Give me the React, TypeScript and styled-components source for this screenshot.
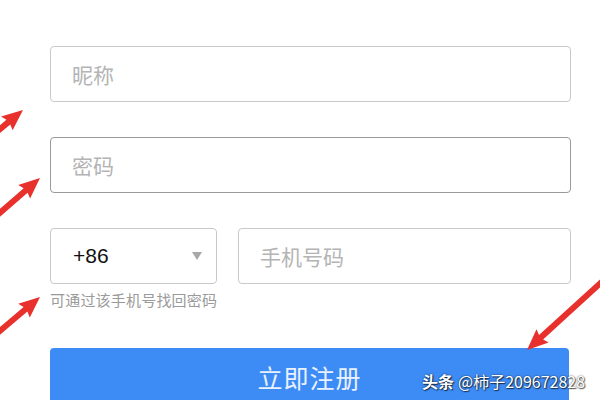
import React from 'react'
import styled, { createGlobalStyle } from 'styled-components'

const GlobalStyle = createGlobalStyle`
  html, body {
    margin: 0;
    padding: 0;
    background: #ffffff;
  }
  body {
    font-family: "Liberation Sans", "Noto Sans CJK SC", sans-serif;
    overflow: hidden;
  }
`

const Page = styled.div`
  position: relative;
  width: 600px;
  height: 400px;
  overflow: hidden;
  background: #fff;
`

const Form = styled.div`
  display: flex;
  flex-direction: column;
  width: 521px;
  padding: 46px 0 0 50px;
`

const Field = styled.div<{ $focused?: boolean; $width?: number }>`
  box-sizing: border-box;
  height: 56px;
  width: ${(p) => (p.$width ? `${p.$width}px` : '100%')};
  border: 1px solid ${(p) => (p.$focused ? '#9a9a9a' : '#c9c9c9')};
  border-radius: 4px;
  display: flex;
  align-items: center;
  padding: 0 21px;
  flex-shrink: 0;
`

const Placeholder = styled.span`
  font-family: "Noto Sans CJK SC", sans-serif;
  font-size: 21px;
  color: #b4b4b4;
`

const Gap = styled.div<{ $h: number }>`
  height: ${(p) => p.$h}px;
`

const Row = styled.div`
  display: flex;
  gap: 21px;
`

const SelectBox = styled(Field)`
  justify-content: space-between;
  padding: 0 14px 0 22px;
`

const Code = styled.span`
  font-family: "Liberation Sans", sans-serif;
  font-size: 21px;
  color: #111;
`

const Caret = styled.span`
  width: 0;
  height: 0;
  border-left: 5px solid transparent;
  border-right: 5px solid transparent;
  border-top: 8px solid #a8a8a8;
`

const Hint = styled.div`
  font-family: "Noto Sans CJK SC", sans-serif;
  font-size: 15px;
  color: #9a9a9a;
  margin-top: 6px;
  line-height: 20px;
  letter-spacing: 0.2px;
`

const SubmitButton = styled.button`
  margin-top: 38px;
  width: 519px;
  height: 60px;
  border: none;
  border-radius: 4px;
  background: #3d8cf6;
  color: #e9f1ff;
  font-family: "Noto Sans CJK SC", sans-serif;
  font-size: 25px;
  letter-spacing: 1px;
  padding: 0 0 2px;
  cursor: pointer;
`

const Overlay = styled.svg`
  position: absolute;
  left: 0;
  top: 0;
  pointer-events: none;
`

const Watermark = styled.div`
  position: absolute;
  left: 422px;
  top: 371px;
  font-family: "Noto Sans CJK SC", sans-serif;
  font-size: 16px;
  color: #ffffff;
  text-shadow: 0 0 2px rgba(0, 0, 0, 0.75), 1px 1px 1px rgba(0, 0, 0, 0.6);
  white-space: nowrap;
  line-height: 20px;

  b {
    font-weight: 700;
    margin-right: 4px;
  }
`

type Pt = [number, number]

const arrowPoints = (from: Pt, to: Pt): string => {
  const dx = to[0] - from[0]
  const dy = to[1] - from[1]
  const len = Math.hypot(dx, dy)
  const ux = dx / len
  const uy = dy / len
  const nx = -uy
  const ny = ux
  const head = 19
  const headW = 9
  const shaft = 3
  const bx = to[0] - ux * head
  const by = to[1] - uy * head
  const pts: Pt[] = [
    [from[0] + nx * shaft, from[1] + ny * shaft],
    [bx + nx * shaft, by + ny * shaft],
    [bx + nx * headW - ux * 2, by + ny * headW - uy * 2],
    to,
    [bx - nx * headW - ux * 2, by - ny * headW - uy * 2],
    [bx - nx * shaft, by - ny * shaft],
    [from[0] - nx * shaft, from[1] - ny * shaft],
  ]
  return pts.map((p) => `${p[0].toFixed(1)},${p[1].toFixed(1)}`).join(' ')
}

const arrows: { from: Pt; to: Pt }[] = [
  { from: [-6, 134], to: [23, 110] },
  { from: [-6, 218], to: [40, 178] },
  { from: [-6, 336], to: [40, 297] },
  { from: [606, 278], to: [527, 350] },
]

export default function App() {
  return (
    <Page>
      <GlobalStyle />
      <Form>
        <Field>
          <Placeholder>昵称</Placeholder>
        </Field>
        <Gap $h={35} />
        <Field $focused>
          <Placeholder>密码</Placeholder>
        </Field>
        <Gap $h={35} />
        <Row>
          <SelectBox $width={167}>
            <Code>+86</Code>
            <Caret />
          </SelectBox>
          <Field $width={333}>
            <Placeholder>手机号码</Placeholder>
          </Field>
        </Row>
        <Hint>可通过该手机号找回密码</Hint>
        <SubmitButton>立即注册</SubmitButton>
      </Form>
      <Overlay width={600} height={400} viewBox="0 0 600 400">
        {arrows.map((a, i) => (
          <polygon key={i} points={arrowPoints(a.from, a.to)} fill="#e8302c" />
        ))}
      </Overlay>
      <Watermark>
        <b>头条</b>@柿子209672828
      </Watermark>
    </Page>
  )
}
